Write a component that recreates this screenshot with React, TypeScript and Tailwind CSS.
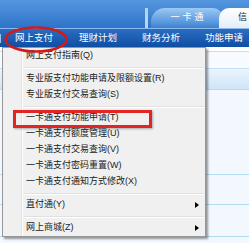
import React from 'react';

type Entry = { label: string; sub?: boolean } | 'sep';

const entries: Entry[] = [
  { label: '网上支付指南(Q)' },
  'sep',
  { label: '专业版支付功能申请及限额设置(R)' },
  { label: '专业版支付交易查询(S)' },
  'sep',
  { label: '一卡通支付功能申请(T)' },
  { label: '一卡通支付额度管理(U)' },
  { label: '一卡通支付交易查询(V)' },
  { label: '一卡通支付密码重置(W)' },
  { label: '一卡通支付通知方式修改(X)' },
  'sep',
  { label: '直付通(Y)', sub: true },
  'sep',
  { label: '网上商城(Z)', sub: true },
];

const font = { fontFamily: '"Liberation Sans", "Noto Sans CJK SC", sans-serif' };

const NavSep = () => <span className="w-px h-[9px] bg-[#9cc2ee]" />;

const App = () => {
  return (
    <div className="relative w-[249px] h-[243px] overflow-hidden bg-[#f2f8fe]" style={font}>
      {/* top band with tabs */}
      <div className="h-[28px] bg-gradient-to-b from-[#5597de] to-[#2d73c9] flex items-end">
        <div className="ml-[145px] w-[3px] h-[20px] bg-[#b5d4f4]" />
        <div className="ml-[3px] w-[72px] h-[20px] rounded-tl-[14px] rounded-tr-[10px] bg-gradient-to-b from-[#9ccaf2] to-[#3e82d4] flex items-center justify-center text-white text-[9px] tracking-[3px] pl-[3px]">
          一卡通
        </div>
        <div className="-ml-[4px] flex-1 h-[20px] rounded-tl-[10px] bg-gradient-to-b from-white to-[#e4eef9] flex items-center justify-end pr-[2px] text-[9px] text-[#222]">
          信
        </div>
      </div>

      {/* nav bar */}
      <div className="h-px bg-[#8db8ea]" />
      <div className="h-[18px] bg-gradient-to-b from-[#2a6dc2] to-[#0f4fa3] flex items-center text-white text-[9.5px]">
        <NavSep />
        <span className="ml-[14px]">网上支付</span>
        <span className="ml-[26px]">理财计划</span>
        <span className="ml-[11px]"><NavSep /></span>
        <span className="ml-[14px]">财务分析</span>
        <span className="ml-[11px]"><NavSep /></span>
        <span className="ml-[14px]">功能申请</span>
      </div>

      {/* page content behind the menu */}
      <div className="flex flex-col">
        <div className="h-[5px] bg-white border-b border-[#bfdff3]" />
        <div className="h-[17px] bg-[#f7fbff] border-b border-[#c4e1f4]" />
        <div className="h-[21px] bg-gradient-to-b from-[#eaf4fd] to-[#cfe5f8] border-b border-[#b6daf0]" />
        <div className="h-[85px] border-b border-[#b4dcef]" />
        <div className="h-[30px] border-b border-[#b4dcef]" />
        <div className="h-[32px] border-b border-[#b4dcef]" />
      </div>

      {/* dropdown menu */}
      <div className="absolute left-[2px] top-[47px] w-[204px] h-[190px] bg-[#f0f0f0] border border-[#979797] shadow-[2px_2px_2px_rgba(0,0,0,0.4)] flex">
        <div className="w-[19px] border-r border-[#e2e3e3]" />
        <div className="flex-1 border-l border-white flex flex-col text-[9px] text-[#222]">
          {entries.map((e, i) =>
            e === 'sep' ? (
              <div key={i} className="h-[7px] flex flex-col justify-center pl-[1px] pr-[1px]">
                <div className="h-px bg-[#e0e0e0]" />
                <div className="h-px bg-white" />
              </div>
            ) : (
              <div key={i} className="h-[16px] flex items-center justify-between pl-[3px] pr-[6px]">
                <span>{e.label}</span>
                {e.sub && (
                  <span className="w-0 h-0 border-y-[3px] border-y-transparent border-l-[4px] border-l-black" />
                )}
              </div>
            )
          )}
        </div>
      </div>

      {/* annotations */}
      <div className="absolute left-[13px] top-[110px] w-[139px] h-[18px] border-[3px] border-[#e12525] shadow-[1px_1px_2px_rgba(0,0,0,0.3)]" />
      <svg className="absolute left-[3px] top-[25px]" width="66" height="29" viewBox="0 0 66 29">
        <ellipse cx="33" cy="14.5" rx="30.5" ry="12" fill="none" stroke="#cf1b1b" strokeWidth="2.5" />
      </svg>
    </div>
  );
};

export default App;
